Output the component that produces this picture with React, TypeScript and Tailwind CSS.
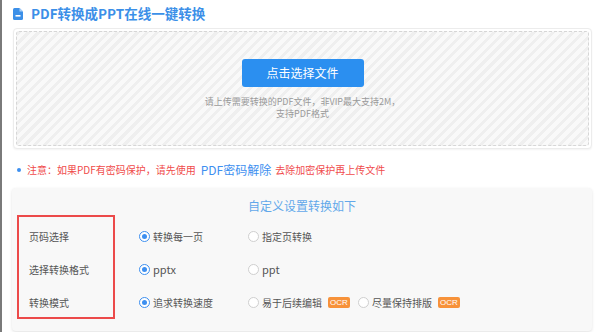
import React from "react"

const Radio = ({ checked }: { checked?: boolean }) => (
  <span
    className={
      checked
        ? "flex h-[11px] w-[11px] shrink-0 items-center justify-center rounded-full border border-[#3d8ff0] bg-white"
        : "flex h-[11px] w-[11px] shrink-0 items-center justify-center rounded-full border border-[#cfcfcf] bg-white"
    }
  >
    {checked && <span className="h-[5px] w-[5px] rounded-full bg-[#3d8ff0]"></span>}
  </span>
)

const Ocr = () => (
  <span className="ml-[3px] flex h-[11px] items-center rounded-[2px] bg-[#f7923a] px-[2px] font-['Liberation_Sans',sans-serif] text-[8px] leading-none text-white">
    OCR
  </span>
)

const Option = ({ label, checked, ocr, width }: { label: string; checked?: boolean; ocr?: boolean; width: string }) => (
  <div className={`flex items-center gap-[3px] ${width}`}>
    <Radio checked={checked} />
    <span className="text-[10px] leading-none text-[#555]">{label}</span>
    {ocr && <Ocr />}
  </div>
)

export default function App() {
  return (
    <div className="h-[332px] w-[600px] overflow-hidden border-l-2 border-[#7a7a7a] bg-white font-['Noto_Sans_CJK_SC',sans-serif]">
      {/* Header */}
      <div className="flex h-[28px] items-center gap-[8px] pl-[11px] pb-[1px]">
        <svg width="10" height="12" viewBox="0 0 10 12">
          <path d="M1.5 0H6.5L10 3.5V10.5Q10 12 8.5 12H1.5Q0 12 0 10.5V1.5Q0 0 1.5 0Z" fill="#3b8fe8" />
          <path d="M6.5 0V3.5H10Z" fill="#a8cff6" />
          <rect x="2.5" y="7" width="5" height="1.6" fill="#fff" />
        </svg>
        <span className="text-[13.5px] font-bold leading-none text-[#3b8fe8]">PDF转换成PPT在线一键转换</span>
      </div>

      {/* Upload card */}
      <div className="ml-[11px] h-[121px] w-[579px] rounded-[4px] border border-[#ececec] bg-white p-[2px] shadow-[0_1px_2px_rgba(0,0,0,0.05)]">
        <div className="flex h-full flex-col items-center rounded-[3px] border border-dashed border-[#d6d6d6] bg-[repeating-linear-gradient(135deg,#efefef_0,#efefef_3px,#f9f9f9_3px,#f9f9f9_7px)] pt-[27px]">
          <button className="flex h-[28px] w-[122px] items-center justify-center rounded-[3px] bg-[#2b8ff0] text-[12px] text-white">
            点击选择文件
          </button>
          <p className="mt-[9px] text-center text-[9px] leading-[12px] text-[#9a9a9a]">
            请上传需要转换的PDF文件，非VIP最大支持2M，
            <br />
            支持PDF格式
          </p>
        </div>
      </div>

      {/* Notice */}
      <div className="mt-[13px] flex h-[16px] items-center pl-[15px]">
        <span className="h-[4px] w-[4px] rounded-full bg-[#3d8ff0]"></span>
        <span className="ml-[6px] text-[10px] leading-none text-[#f04b4b]">注意：如果PDF有密码保护，请先使用</span>
        <span className="ml-[5px] text-[12px] leading-none text-[#3d8ff0]">PDF密码解除</span>
        <span className="ml-[4px] text-[10px] leading-none text-[#f04b4b]">去除加密保护再上传文件</span>
      </div>

      {/* Settings panel */}
      <div className="relative ml-[10px] mt-[10px] h-[143px] w-[580px] rounded-[4px] bg-[#f8f8f8] pt-[11px] shadow-[0_1px_3px_rgba(0,0,0,0.12)]">
        <div className="text-center text-[12px] leading-[14px] text-[#62a8ea]">自定义设置转换如下</div>
        <div className="mt-[7px] flex flex-col">
          <div className="flex h-[33px] items-center">
            <span className="w-[127px] pl-[17px] text-[10px] leading-none text-[#555]">页码选择</span>
            <Option label="转换每一页" checked width="w-[109px]" />
            <Option label="指定页转换" width="w-[110px]" />
          </div>
          <div className="flex h-[33px] items-center">
            <span className="w-[127px] pl-[17px] text-[10px] leading-none text-[#555]">选择转换格式</span>
            <div className="flex w-[109px] items-center gap-[3px]">
              <Radio checked />
              <span className="text-[11px] leading-none text-[#555]">pptx</span>
            </div>
            <div className="flex w-[110px] items-center gap-[3px]">
              <Radio />
              <span className="text-[11px] leading-none text-[#555]">ppt</span>
            </div>
          </div>
          <div className="flex h-[33px] items-center">
            <span className="w-[127px] pl-[17px] text-[10px] leading-none text-[#555]">转换模式</span>
            <Option label="追求转换速度" checked width="w-[109px]" />
            <Option label="易于后续编辑" ocr width="w-[110px]" />
            <Option label="尽量保持排版" ocr width="w-[110px]" />
          </div>
        </div>
        {/* red highlight box */}
        <div className="absolute left-[5px] top-[27px] h-[104px] w-[98px] border-2 border-[#ec4a4a]"></div>
      </div>
    </div>
  )
}
